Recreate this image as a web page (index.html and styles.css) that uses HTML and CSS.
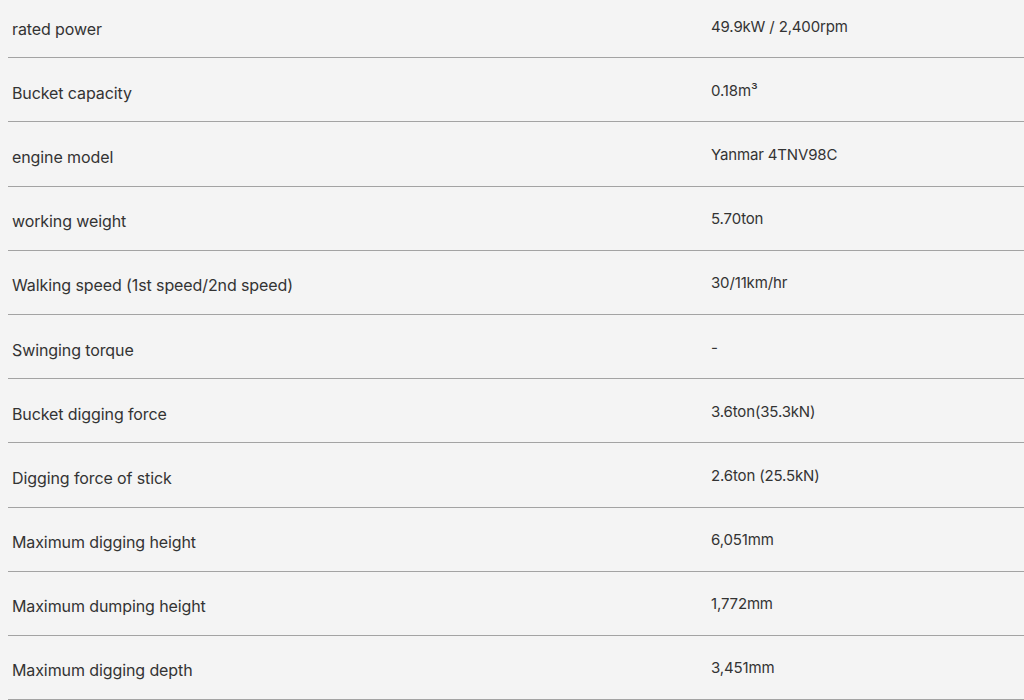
FILE: index.html
```html
<!DOCTYPE html>
<html lang="en">
<head>
<meta charset="utf-8">
<title>Specifications</title>
<link rel="stylesheet" href="styles.css">
</head>
<body>
<div class="specs">
  <div class="row"><div class="label">rated power</div><div class="value">49.9kW / 2,400rpm</div></div>
  <div class="row"><div class="label">Bucket capacity</div><div class="value">0.18m³</div></div>
  <div class="row"><div class="label">engine model</div><div class="value">Yanmar 4TNV98C</div></div>
  <div class="row"><div class="label">working weight</div><div class="value">5.70ton</div></div>
  <div class="row"><div class="label">Walking speed (1st speed/2nd speed)</div><div class="value">30/11km/hr</div></div>
  <div class="row"><div class="label">Swinging torque</div><div class="value">-</div></div>
  <div class="row"><div class="label">Bucket digging force</div><div class="value">3.6ton(35.3kN)</div></div>
  <div class="row"><div class="label">Digging force of stick</div><div class="value">2.6ton (25.5kN)</div></div>
  <div class="row"><div class="label">Maximum digging height</div><div class="value">6,051mm</div></div>
  <div class="row"><div class="label">Maximum dumping height</div><div class="value">1,772mm</div></div>
  <div class="row"><div class="label">Maximum digging depth</div><div class="value">3,451mm</div></div>
</div>
</body>
</html>
```
FILE: styles.css
```css
html, body {
  margin: 0;
  padding: 0;
  background: #f4f4f4;
}
body {
  font-family: Inter, "Liberation Sans", Arial, sans-serif;
  font-size: 15px;
  color: #333;
  overflow: hidden;
}
.specs {
  margin-left: 8px;
  margin-top: -6px;
}
.row {
  display: grid;
  grid-template-columns: 699px 1fr;
  align-items: center;
  height: 63.2px;
  border-bottom: 1px solid #a3a3a3;
  padding: 0 4px 0 4px;
}
.label {
  font-size: 16px;
  letter-spacing: -0.1px;
  line-height: 20px;
  margin-top: 6px;
}
.value {
  letter-spacing: -0.15px;
  line-height: 20px;
  margin-top: 2px;
}
```
